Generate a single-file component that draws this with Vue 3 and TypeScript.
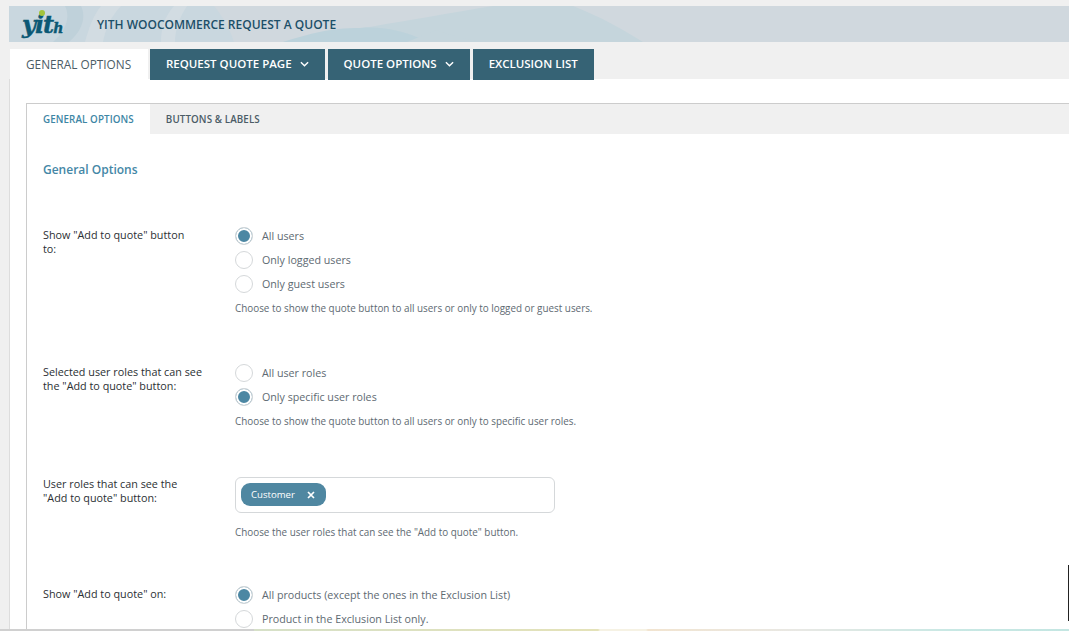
<script setup lang="ts">
type Radio = { label: string; checked?: boolean };

const mainTabs = [
  { label: "REQUEST QUOTE PAGE", caret: true },
  { label: "QUOTE OPTIONS", caret: true },
  { label: "EXCLUSION LIST", caret: false },
];

const showTo: Radio[] = [
  { label: "All users", checked: true },
  { label: "Only logged users" },
  { label: "Only guest users" },
];
const roles: Radio[] = [
  { label: "All user roles" },
  { label: "Only specific user roles", checked: true },
];
const showOn: Radio[] = [
  { label: "All products (except the ones in the Exclusion List)", checked: true },
  { label: "Product in the Exclusion List only." },
];
</script>

<template>
  <div class="page">
    <header class="banner">
      <svg class="banner-art" viewBox="0 0 1060 36" preserveAspectRatio="none">
        <path d="M0 0H205C215 12 222 26 225 36H0Z" fill="#c9d7df" />
        <path d="M56 0H72C78 12 72 26 60 36H44C56 26 62 12 56 0Z" fill="#bfd1da" />
        <path d="M92 0H112C102 10 96 24 94 36H76C80 22 84 10 92 0Z" fill="#d2dce2" />
        <path d="M165 0H178C170 12 166 24 166 36H152C152 22 156 10 165 0Z" fill="#d2dce2" />
        <path d="M274 36C320 28 400 14 484 0H564C590 10 615 24 634 36Z" fill="#c5d5dc" />
        <path d="M274 36C300 28 320 22 351 22C375 20 400 26 418 36Z" fill="#bcd2db" />
        <path d="M398 36C410 31 420 27 427 24C440 28 448 32 478 36Z" fill="#c5d5dc" />
      </svg>
      <div class="logo">
        <span class="logo-word">yit<small>h</small></span>
        <span class="logo-dot"></span>
      </div>
      <h1>YITH WOOCOMMERCE REQUEST A QUOTE</h1>
    </header>

    <nav class="main-tabs">
      <a class="main-tab active">GENERAL OPTIONS</a>
      <a v-for="t in mainTabs" :key="t.label" class="main-tab">
        {{ t.label }}
        <svg v-if="t.caret" class="caret" viewBox="0 0 10 6" width="9" height="6">
          <path d="M1 1l4 4 4-4" fill="none" stroke="#fff" stroke-width="1.6" />
        </svg>
      </a>
    </nav>

    <main class="content">
      <section class="panel">
        <div class="sub-tabs">
          <a class="sub-tab active">GENERAL OPTIONS</a>
          <a class="sub-tab">BUTTONS &amp; LABELS</a>
        </div>

        <div class="form">
          <h2>General Options</h2>

          <div class="row row-show">
            <div class="label">Show "Add to quote" button<br />to:</div>
            <div class="control">
              <label v-for="r in showTo" :key="r.label" class="radio">
                <span class="dot" :class="{ on: r.checked }"></span>{{ r.label }}
              </label>
              <p class="desc">Choose to show the quote button to all users or only to logged or guest users.</p>
            </div>
          </div>

          <div class="row row-roles">
            <div class="label">Selected user roles that can see the "Add to quote" button:</div>
            <div class="control">
              <label v-for="r in roles" :key="r.label" class="radio">
                <span class="dot" :class="{ on: r.checked }"></span>{{ r.label }}
              </label>
              <p class="desc">Choose to show the quote button to all users or only to specific user roles.</p>
            </div>
          </div>

          <div class="row row-select">
            <div class="label">User roles that can see the<br />"Add to quote" button:</div>
            <div class="control">
              <div class="select">
                <span class="chip">Customer
                  <svg viewBox="0 0 8 8" width="8" height="8">
                    <path d="M1 1l6 6M7 1l-6 6" stroke="#fff" stroke-width="1.7" />
                  </svg>
                </span>
              </div>
              <p class="desc">Choose the user roles that can see the "Add to quote" button.</p>
            </div>
          </div>

          <div class="row row-last">
            <div class="label">Show "Add to quote" on:</div>
            <div class="control">
              <label v-for="r in showOn" :key="r.label" class="radio">
                <span class="dot" :class="{ on: r.checked }"></span>{{ r.label }}
              </label>
            </div>
          </div>
        </div>
      </section>
    </main>

    <div class="bottom-strip"></div>
    <div class="edge-bar"></div>
  </div>
</template>

<style>
html,
body {
  margin: 0;
  background: #f0f0f0;
  overflow: hidden;
}
</style>

<style scoped>
.page {
  position: relative;
  width: 1069px;
  height: 631px;
  overflow: hidden;
  padding-top: 6px;
  box-sizing: border-box;
  background: #f0f0f0;
  font-family: "Open Sans", sans-serif;
}

.banner {
  position: relative;
  margin-left: 9px;
  height: 36px;
  background: #d0d8de;
  display: flex;
  align-items: center;
}

.banner-art {
  position: absolute;
  inset: 0;
  width: 100%;
  height: 100%;
}

.logo {
  position: relative;
  width: 88px;
  height: 36px;
  flex: none;
}

.logo-word {
  position: absolute;
  left: 13px;
  top: 1px;
  font-family: "DejaVu Serif", serif;
  font-style: italic;
  font-weight: 700;
  font-size: 24px;
  letter-spacing: -1px;
  color: #0b5874;
  -webkit-text-stroke: 0.4px #0b5874;
  line-height: 36px;
}

.logo-word small {
  font-size: 14px;
}

.logo-dot {
  position: absolute;
  left: 30px;
  top: 4px;
  width: 6px;
  height: 6px;
  border-radius: 50%;
  background: #a4c43c;
}

.banner h1 {
  position: relative;
  margin: 0;
  font-size: 12px;
  font-weight: 600;
  color: #1c4f68;
  white-space: nowrap;
}

.main-tabs {
  display: flex;
  gap: 3px;
  margin: 7px 0 0 10px;
  height: 31px;
}

.main-tab {
  display: flex;
  align-items: center;
  gap: 8px;
  padding: 0 16px 2px;
  box-sizing: border-box;
  background: #366375;
  color: #fff;
  font-size: 11.5px;
  font-weight: 600;
  white-space: nowrap;
}

.main-tab.active {
  background: #fff;
  color: #4b5c66;
  font-size: 11.8px;
  font-weight: 400;
  width: 138px;
  margin-right: -1px;
}

.content {
  margin: -1px 0 0 9px;
  height: 552px;
  background: #fff;
  border-left: 1px solid #ddd;
  padding: 24px 0 0 16px;
  box-sizing: border-box;
}

.panel {
  border: 1px solid #ccc;
  border-right: 0;
  height: 600px;
}

.sub-tabs {
  display: flex;
  height: 30px;
  background: #f0f0f0;
}

.sub-tab {
  display: flex;
  align-items: center;
  padding: 0 16px;
  font-size: 9.8px;
  font-weight: 600;
  color: #4b5c66;
  letter-spacing: 0.1px;
}

.sub-tab.active {
  background: #fff;
  color: #3d86a5;
}

.form {
  padding: 27px 0 0 16px;
}

.form h2 {
  margin: 0;
  font-size: 12px;
  line-height: 17px;
  font-weight: 600;
  color: #4487a6;
}

.row {
  display: flex;
}

.row-show,
.row-roles {
  margin-top: 46px;
}

.row-select {
  margin-top: 49px;
}

.row-last {
  margin-top: 44px;
}

.label {
  width: 192px;
  padding: 4px 28px 0 0;
  box-sizing: border-box;
  font-size: 10.8px;
  line-height: 14px;
  color: #2b2f33;
}

.row-select .label {
  padding-top: 0;
}

.control {
  flex: 1;
}

.radio {
  display: flex;
  align-items: center;
  height: 24px;
  font-size: 10.7px;
  color: #5e6a72;
}

.dot {
  width: 16px;
  height: 16px;
  border: 1px solid #d5d8da;
  border-radius: 50%;
  margin-right: 9px;
  box-sizing: content-box;
  background: #fff;
}

.dot.on {
  background: #4c87a3;
  box-shadow: inset 0 0 0 2px #fff;
}

.desc {
  margin: 6px 0 0;
  font-size: 9.9px;
  line-height: 13px;
  color: #5e6a72;
}

.select + .desc {
  margin-top: 13px;
}

.select {
  display: flex;
  align-items: flex-start;
  width: 320px;
  height: 36px;
  border: 1px solid #d5d8da;
  border-radius: 6px;
  box-sizing: border-box;
  padding: 5px;
}

.chip {
  display: inline-flex;
  align-items: center;
  gap: 12px;
  height: 23px;
  padding: 0 11px 0 10px;
  border-radius: 9px;
  background: #4f87a1;
  color: #fff;
  font-size: 9.6px;
  font-weight: 500;
}

.bottom-strip {
  position: absolute;
  left: 0;
  right: 0;
  bottom: 0;
  height: 2px;
  background: linear-gradient(
    90deg,
    #d0d0d0 0 254px,
    #d6e0c8 254px,
    #e4e2b8 598px,
    #f6f2e4 600px,
    #f6f2e4 646px,
    #f2e4d0 648px,
    #e8e8e4 800px,
    #c8e8e4 950px,
    #c4e6e2 1069px
  );
}

.edge-bar {
  position: absolute;
  left: 1068px;
  top: 565px;
  width: 1px;
  height: 56px;
  background: #222;
}
</style>
